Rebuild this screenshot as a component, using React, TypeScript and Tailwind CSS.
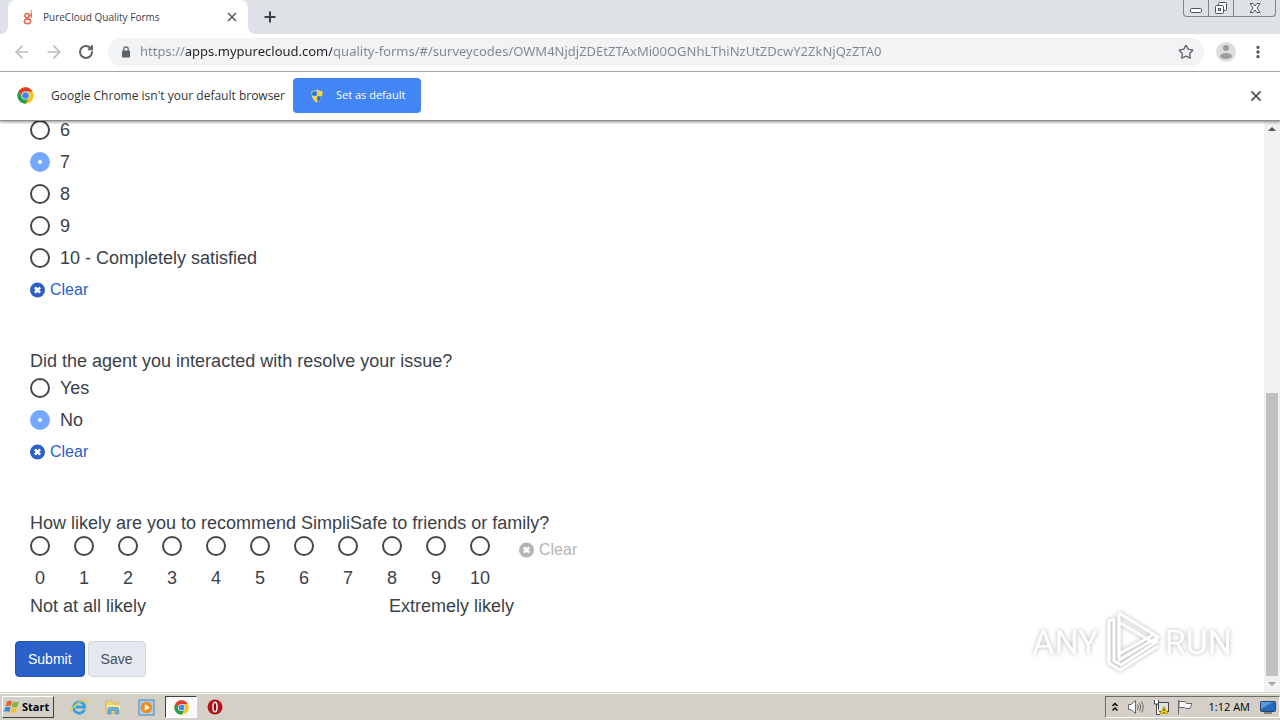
import { useState } from 'react';
import { ArrowLeft, ArrowRight, MoreVertical, Plus, RotateCw, Star, X } from 'lucide-react';

const URL = 'https://apps.mypurecloud.com/quality-forms/#/surveycodes/OWM4NjdjZDEtZTAxMi00OGNhLThiNzUtZDcwY2ZkNjQzZTA0';
const satisfaction = ['6', '7', '8', '9', '10 - Completely satisfied'];
const scale = ['0', '1', '2', '3', '4', '5', '6', '7', '8', '9', '10'];

const radioClass =
  'size-5 shrink-0 appearance-none rounded-full border-2 border-[#45484d] bg-white checked:border-8 checked:border-[#75a8ff]';

function ChromeLogo({ className }: { className?: string }) {
  return (
    <svg viewBox="0 0 48 48" className={className} aria-hidden="true">
      <circle cx="24" cy="24" r="23" fill="#fbc116" />
      <path d="M4.1 12.5A23 23 0 0 1 43.9 12.5H24A11.5 11.5 0 0 0 14 18.3L14 29.7Z" fill="#de3b30" />
      <path d="M4.1 12.5L14 29.8A11.5 11.5 0 0 0 24 35.5L34 29.8L24 47A23 23 0 0 1 4.1 12.5Z" fill="#1fa055" />
      <circle cx="24" cy="24" r="11.5" fill="#fff" />
      <circle cx="24" cy="24" r="9.5" fill="#4a86e8" />
    </svg>
  );
}

function GenesysIcon() {
  return (
    <svg viewBox="0 0 12 16" className="h-4 w-3" fill="none" stroke="#dd6a55" strokeWidth="1.5" aria-hidden="true">
      <circle cx="5" cy="6.5" r="2.1" />
      <path d="M9.2 3.5V8.500M9.2 1.200V2.400M7 6.500H9" />
      <ellipse cx="5.5" cy="12.500" rx="3.200" ry="2.200" />
      <path d="M3 10.200H8.500" />
    </svg>
  );
}

function ShieldIcon() {
  return (
    <svg viewBox="0 0 16 16" className="size-4" aria-hidden="true">
      <path d="M8 1C6.2 2.4 4 2.8 2 2.8C2 8.5 3.4 12.6 8 15C12.6 12.6 14 8.5 14 2.8C12 2.8 9.8 2.4 8 1Z" fill="#d9e3ee" stroke="#59717f" strokeWidth=".7" />
      <path d="M7.8 2.4C6.4 3.4 4.7 3.8 3.1 3.9L3.4 7.8H7.8Z" fill="#2672c8" />
      <path d="M8.2 2.4C9.6 3.4 11.3 3.8 12.9 3.9L12.6 7.8H8.2Z" fill="#f9d233" />
      <path d="M3.5 8.2C4 10.8 5.3 12.6 7.8 13.9V8.2Z" fill="#f9d233" />
      <path d="M12.5 8.2C12 10.8 10.7 12.6 8.2 13.9V8.2Z" fill="#2672c8" />
    </svg>
  );
}

function ClearIcon() {
  return (
    <svg viewBox="0 0 16 16" className="size-4" aria-hidden="true">
      <circle cx="7.5" cy="8" r="7.5" fill="currentColor" />
      <path d="M4.900 5.4L10.100 10.6M10.100 5.4L4.900 10.6" stroke="#fff" strokeWidth="2.6" />
    </svg>
  );
}

function TabFlare({ flip }: { flip?: boolean }) {
  return (
    <svg viewBox="0 0 8 8" className="size-2 self-end" aria-hidden="true">
      <path d={flip ? 'M0 0V8H8C3 8 0 5 0 0Z' : 'M8 0V8H0C5 8 8 5 8 0Z'} fill="#fff" />
    </svg>
  );
}

function WindowControls() {
  return (
    <div className="ml-auto mr-1 flex h-[17px] self-start rounded-b border border-t-0 border-[#7e838c] text-[#4c535e]">
      <button aria-label="Minimize" className="flex w-[25px] justify-center border-r border-[#7e838c]">
        <svg viewBox="0 0 14 16" className="h-4 w-3.5" fill="#fff" stroke="currentColor">
          <rect x="1.5" y="8.5" width="11" height="4" rx="1" />
        </svg>
      </button>
      <button aria-label="Restore" className="flex w-[25px] justify-center border-r border-[#7e838c]">
        <svg viewBox="0 0 14 16" className="h-4 w-3.5" fill="#fff" stroke="currentColor">
          <rect x="4.5" y="2.5" width="8" height="8" rx="1" />
          <rect x="1.5" y="5.5" width="8" height="8" rx="1" />
          <rect x="4.5" y="8.5" width="2" height="2" />
        </svg>
      </button>
      <button aria-label="Close window" className="flex w-[41px] justify-center">
        <svg viewBox="0 0 14 16" className="h-4 w-3.5" fill="#fff" stroke="currentColor">
          <path d="M2 3.5H5L7 6L9 3.5H12L9 8L12 12.5H9L7 10L5 12.5H2L5 8Z" />
        </svg>
      </button>
    </div>
  );
}

function TabStrip() {
  return (
    <div className="flex h-[34px] shrink-0 items-center bg-[#dee1e6]">
      <TabFlare />
      <div className="flex h-full w-60 items-center rounded-t-lg bg-white pl-[14px] pr-[9px]">
        <GenesysIcon />
        <span className="ml-[9px] flex-1 whitespace-nowrap text-[10px] text-[#3c4043]">PureCloud Quality Forms</span>
        <button aria-label="Close tab">
          <X className="size-3.5 text-[#5f6368]" strokeWidth={3} />
        </button>
      </div>
      <TabFlare flip />
      <button aria-label="New tab" className="ml-1.5">
        <Plus className="size-4 text-[#3c4043]" strokeWidth={3} />
      </button>
      <WindowControls />
    </div>
  );
}

function Toolbar() {
  return (
    <div className="flex h-[38px] shrink-0 items-center border-b border-[#b4b5b7] bg-white pl-3 pr-3.5 pb-px">
      <button aria-label="Back"><ArrowLeft className="size-5 text-[#babcbe]" /></button>
      <button aria-label="Forward" className="ml-3"><ArrowRight className="size-5 text-[#babcbe]" /></button>
      <button aria-label="Reload" className="ml-3.5"><RotateCw className="size-4 text-[#5f6368]" strokeWidth={3} /></button>
      <div className="ml-[14px] flex h-7 flex-1 items-center rounded-full bg-[#f1f3f4] pl-3 pr-2.5">
        <svg viewBox="0 0 12 12" className="size-3" fill="none" aria-hidden="true">
          <rect x="2" y="4.500" width="8" height="7" rx="1" fill="#5f6368" />
          <path d="M3.800 5V3A2.200 2.200 0 0 1 8.200 3V5" stroke="#5f6368" strokeWidth="1.200" />
        </svg>
        {/* the host name is darker than the rest of the address */}
        <input
          aria-label="Address"
          defaultValue={URL}
          className="ml-2 flex-1 bg-[linear-gradient(90deg,#80868b_46px,#202124_46px,#202124_192px,#80868b_192px)] bg-clip-text font-['Noto_Sans',sans-serif] text-[13px] text-transparent outline-none"
        />
        <button aria-label="Bookmark"><Star className="size-4 text-[#5f6368]" strokeWidth={2} /></button>
      </div>
      <button aria-label="Profile" className="ml-3">
        <svg viewBox="0 0 20 20" className="size-5">
          <circle cx="10" cy="10" r="10" fill="#dcddde" />
          <circle cx="10" cy="6" r="3" fill="#9a9c9f" />
          <ellipse cx="10" cy="14" rx="6" ry="3" fill="#9a9c9f" />
        </svg>
      </button>
      <button aria-label="Menu" className="ml-3.5"><MoreVertical className="size-4 text-[#4a4d51]" strokeWidth={3} /></button>
    </div>
  );
}

function InfoBar() {
  return (
    <div className="relative z-10 flex h-[49px] shrink-0 items-center border-b border-[#8f8f8f] bg-white pb-px pl-[17px] pr-4 shadow-[0_1px_3px_rgba(0,0,0,0.45)]">
      <ChromeLogo className="size-[17px]" />
      <span className="ml-[17px] text-xs text-[#333]">Google Chrome isn't your default browser</span>
      <button className="ml-2 flex h-[35px] items-center rounded bg-[#4285f4] px-4 text-[11px] text-white">
        <ShieldIcon />
        <span className="ml-[11px]">Set as default</span>
      </button>
      <button aria-label="Dismiss" className="ml-auto">
        <X className="size-4 text-[#5f6368]" strokeWidth={3} />
      </button>
    </div>
  );
}

function ClearButton({ onClick, disabled }: { onClick: () => void; disabled?: boolean }) {
  return (
    <button
      type="button"
      onClick={onClick}
      disabled={disabled}
      className="flex h-8 items-center gap-1 text-base text-[#2a60c8] disabled:text-[#b4b4b4]"
    >
      <ClearIcon />
      Clear
    </button>
  );
}

function RadioList({ name, options, value, onChange }: {
  name: string;
  options: string[];
  value: string;
  onChange: (v: string) => void;
}) {
  return (
    <>
      {options.map((opt) => (
        <label key={opt} className="flex h-8 items-center gap-2.5">
          <input type="radio" name={name} checked={value === opt} onChange={() => onChange(opt)} className={radioClass} />
          {opt}
        </label>
      ))}
      <ClearButton onClick={() => onChange('')} />
    </>
  );
}

function SurveyForm() {
  const [satisfied, setSatisfied] = useState('7');
  const [resolved, setResolved] = useState('No');
  const [recommend, setRecommend] = useState('');

  return (
    <form
      onSubmit={(e) => e.preventDefault()}
      className="flex min-w-0 flex-1 flex-col justify-end overflow-hidden pb-[15px] pl-[15px] font-['Liberation_Sans',Arial,sans-serif] text-lg text-[#3b4148]"
    >
      <div className="flex flex-col gap-11 pl-[15px]">
        <fieldset>
          <RadioList name="satisfied" options={satisfaction} value={satisfied} onChange={setSatisfied} />
        </fieldset>

        <fieldset>
          <legend className="leading-[22px]">Did the agent you interacted with resolve your issue?</legend>
          <RadioList name="resolved" options={['Yes', 'No']} value={resolved} onChange={setResolved} />
        </fieldset>

        <fieldset>
          <legend className="leading-[22px]">How likely are you to recommend SimpliSafe to friends or family?</legend>
          <div className="flex gap-[5px]">
            <div className="w-[484px]">
              <div className="flex gap-6 pt-0.5">
                {scale.map((n) => (
                  <label key={n} className="flex w-5 flex-col items-center gap-3 leading-5">
                    <input type="radio" name="recommend" checked={recommend === n} onChange={() => setRecommend(n)} className={radioClass} />
                    {n}
                  </label>
                ))}
              </div>
              <div className="flex justify-between pt-2 leading-5">
                <span>Not at all likely</span>
                <span>Extremely likely</span>
              </div>
            </div>
            <ClearButton onClick={() => setRecommend('')} disabled={recommend === ''} />
          </div>
        </fieldset>
      </div>

      <div className="mt-[25px] flex gap-[3px] text-sm">
        <button type="submit" className="h-9 rounded border border-[#2456b5] bg-[#2a60c8] px-3 text-white">Submit</button>
        <button type="button" className="h-9 rounded border border-[#ced6df] bg-[#e4e9f0] px-3 text-[#45505c]">Save</button>
      </div>
    </form>
  );
}

function Scrollbar() {
  return (
    <div className="flex w-4 shrink-0 flex-col items-center bg-[#f1f1f1]">
      <div className="flex h-4 items-center">
        <svg viewBox="0 0 8 4" className="h-1 w-2"><path d="M0 4L4 0L8 4Z" fill="#505050" /></svg>
      </div>
      <div className="flex min-h-0 w-3 flex-1 flex-col justify-end">
        <div className="h-21/40 bg-[#c1c1c1]" />
      </div>
      <div className="flex h-4 items-center">
        <svg viewBox="0 0 8 4" className="h-1 w-2"><path d="M0 0L4 4L8 0Z" fill="#a3a3a3" /></svg>
      </div>
    </div>
  );
}

function Watermark() {
  return (
    <div className="pointer-events-none absolute bottom-4 right-12 flex items-center gap-1 font-[Roboto,sans-serif] text-[34px] text-white drop-shadow-[0_0_2px_rgba(0,0,0,0.3)]">
      <span>ANY</span>
      <svg viewBox="0 0 58 68" className="h-[68px] w-[58px]" fill="none" stroke="#fff" strokeWidth="3" strokeLinejoin="round">
        <path d="M16 5L55 29L51 35L16 14V46L50 27" />
        <path d="M16 5V52L55 29" />
        <path d="M11 11L6 13V55L17 62L55 38" />
        <path d="M11 11V53L18 57L55 33" />
      </svg>
      <span>RUN</span>
    </div>
  );
}

function QuickLaunch() {
  return (
    <div className="ml-4 flex items-center">
      <button aria-label="Internet Explorer" className="mr-4">
        <svg viewBox="0 0 18 18" className="size-[18px]" fill="none">
          <path d="M14.5 11.5A5.6 5.6 0 1 1 14.8 9H6" stroke="#36a3dc" strokeWidth="2.8" />
          <path d="M2 15.5C-1 12 10 1 15.5 2.2C17 2.8 16.5 4.5 15.5 6" stroke="#ecc63f" strokeWidth="1.4" />
        </svg>
      </button>
      <button aria-label="Explorer" className="mr-4">
        <svg viewBox="0 0 18 18" className="size-[18px]">
          <path d="M2 3H8L9 5H15V15H2Z" fill="#f0d571" stroke="#c8a94b" strokeWidth=".6" />
          <path d="M3 7H16V12H3Z" fill="#f8e9a2" />
          <path d="M4 16V11Q4 9.5 5.5 9.5H13Q14.5 9.5 14.5 11V16H11.5V12.5H7V16Z" fill="#63b1e0" stroke="#3b7fae" strokeWidth=".5" />
        </svg>
      </button>
      <button aria-label="Media Player" className="mr-2.5">
        <svg viewBox="0 0 17 17" className="size-[17px]">
          <rect x="1" y="1" width="15" height="15" fill="#a9d0ee" stroke="#4b88b8" />
          <circle cx="8.5" cy="8.5" r="5.8" fill="#ef8b1d" />
          <path d="M6.8 5.2L12 8.5L6.8 11.8Z" fill="#fff" />
        </svg>
      </button>
      <button aria-label="Chrome" className="flex h-[22px] w-8 items-center justify-center border border-b-white border-r-white border-l-[#404040] border-t-[#404040] bg-[#fafafa]">
        <ChromeLogo className="size-[15px]" />
      </button>
      <button aria-label="Opera" className="ml-2.5">
        <svg viewBox="0 0 16 16" className="size-4">
          <circle cx="8" cy="8" r="7.5" fill="#b3141b" />
          <ellipse cx="8" cy="8" rx="2" ry="4.800" fill="#8a0b10" stroke="#f4eeee" strokeWidth="1.6" />
        </svg>
      </button>
    </div>
  );
}

function Tray() {
  return (
    <div className="ml-auto flex h-[22px] items-center border border-b-white border-r-white border-l-[#6f6b64] border-t-[#6f6b64] pl-[5px] pr-[3px] text-[11px] text-black">
      <svg viewBox="0 0 8 10" className="h-2.5 w-2" fill="none" stroke="#000" strokeWidth="1.5">
        <path d="M1.5 4L4 1.5L6.500 4M1.5 8.500L4 6L6.500 8.500" />
      </svg>
      <svg viewBox="0 0 18 16" className="ml-2 h-4 w-[18px]" fill="none" stroke="#66686b">
        <path d="M1.500 5.500H4L8.500 1.500V14.500L4 10.500H1.500Z" fill="#fff" />
        <path d="M10.500 5.500Q12 8 10.500 10.500M12.500 4Q15 8 12.500 12M14.500 2.500Q18 8 14.500 13.500" />
      </svg>
      <svg viewBox="0 0 16 16" className="ml-2 size-4" stroke="#45474a">
        <rect x="5.500" y="3.500" width="10" height="9" fill="#dfe3e6" />
        <path d="M1.500 1V5H5.500V1M3.500 5V15.500H7" fill="#fff" />
        <path d="M11 7.500L15 14.500H7Z" fill="#f7d51d" stroke="#c4a200" />
        <path d="M11 9.500V12M11 13V14" stroke="#222" />
      </svg>
      <svg viewBox="0 0 16 16" className="ml-2 size-4" fill="#fff" stroke="#66686b">
        <path d="M1.500 1V15.500M2 2.500H8L9.500 4.500H15L13 9.500H9L7.500 8.500H2Z" />
      </svg>
      <span className="ml-4">1:12 AM</span>
      <svg viewBox="0 0 16 14" className="ml-2.5 h-3.5 w-4">
        <rect x=".5" y="1.500" width="15" height="10" rx="1" fill="#2668bd" stroke="#27466f" />
        <path d="M1 2H13L1 9Z" fill="#5a9ae0" />
        <path d="M4 13H12" stroke="#666" strokeWidth="1.500" />
      </svg>
    </div>
  );
}

function Taskbar() {
  return (
    <div className="flex h-7 shrink-0 items-center border-t border-[#d4d0c8] bg-[#d4d0c8] pl-0.5 pt-px shadow-[inset_0_1px_0_#fff]">
      <button className="flex h-[22px] w-[52px] items-center gap-px border border-b-[#404040] border-r-[#404040] border-l-white border-t-white text-[11px] font-bold text-black">
        <svg viewBox="0 0 18 18" className="size-[18px]" aria-hidden="true">
          <path d="M4 3.500Q6.500 1.800 9 3.500L7.800 8.200Q5.300 6.800 2.600 8.200Z" fill="#e8602c" />
          <path d="M10 3.800Q12.500 5 15.800 3.500L14.500 8.500Q11.500 9.800 8.800 8.500Z" fill="#7db844" />
          <path d="M2.300 9.300Q5 8 7.500 9.400L6.300 14Q3.500 12.500 1 14Z" fill="#3d8bd4" />
          <path d="M8.500 9.600Q11.500 10.800 14.200 9.600L13 14.300Q10 15.800 7.300 14.500Z" fill="#f7c32e" />
        </svg>
        Start
      </button>
      <QuickLaunch />
      <Tray />
    </div>
  );
}

export default function App() {
  return (
    <div className="flex h-screen flex-col overflow-hidden bg-white font-['Open_Sans','Noto_Sans',sans-serif]">
      <TabStrip />
      <Toolbar />
      <InfoBar />
      <main className="relative flex min-h-0 flex-1">
        <SurveyForm />
        <Watermark />
        <Scrollbar />
      </main>
      <Taskbar />
    </div>
  );
}
